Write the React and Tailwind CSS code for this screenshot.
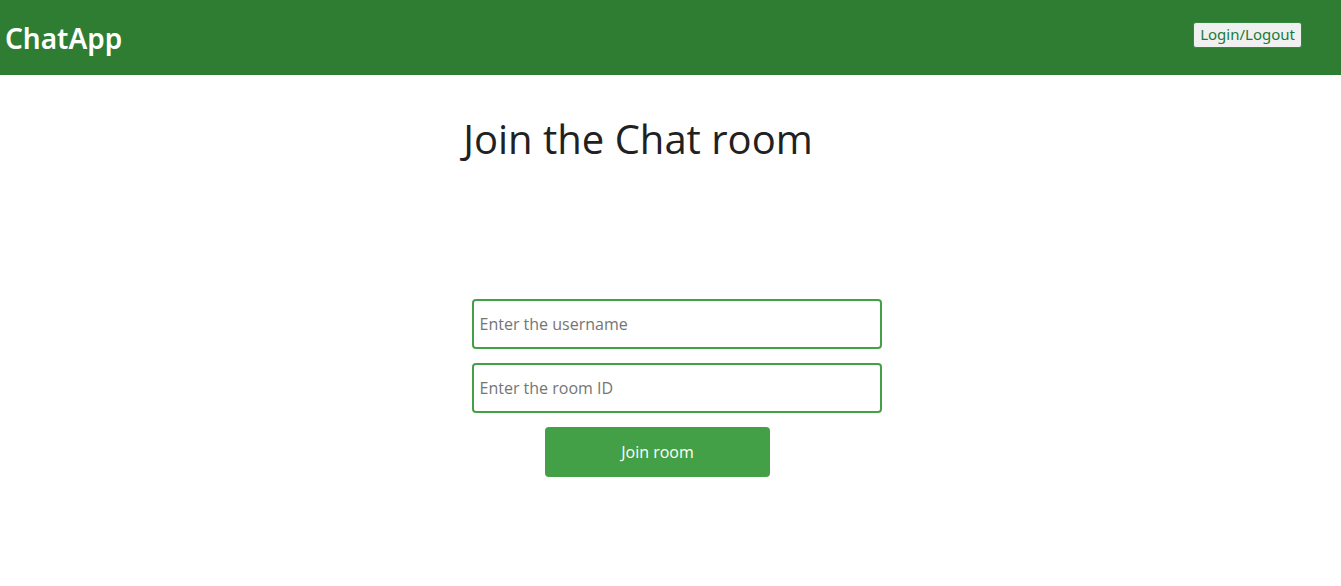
import React, { useState } from 'react';

export default function App() {
  const [username, setUsername] = useState('');
  const [roomId, setRoomId] = useState('');

  return (
    <div className="min-h-screen bg-white" style={{ fontFamily: '"Open Sans", sans-serif' }}>
      {/* Navbar */}
      <header className="h-[75px] bg-[#2e7d32] flex items-center justify-between pl-[5px] pr-[39px]">
        <h1 className="text-[28px] font-semibold text-white leading-none" style={{ fontFamily: '"Noto Sans", sans-serif' }}>
          ChatApp
        </h1>
        <button className="mb-[6px] h-[26px] px-[6px] bg-[#f0f0f0] text-[#1b7a3a] text-[15px] rounded-[3px] border border-[#2f8a3e] leading-none" style={{ fontFamily: '"Noto Sans", sans-serif' }}>
          Login/Logout
        </button>
      </header>

      <main className="flex flex-col items-center">
        <h2 className="mt-[32px] pr-[65px] text-[40px] text-[#212121] leading-[64px] font-normal">
          Join the Chat room
        </h2>

        <div className="mt-[128px] pl-[12px] flex flex-col items-center">
          <input
            type="text"
            value={username}
            onChange={(e) => setUsername(e.target.value)}
            placeholder="Enter the username"
            className="w-[410px] h-[50px] px-[6px] border-2 border-[#43a047] rounded-[4px] text-[16px] text-[#212121] placeholder:text-[#757575] outline-none"
          />
          <input
            type="text"
            value={roomId}
            onChange={(e) => setRoomId(e.target.value)}
            placeholder="Enter the room ID"
            className="mt-[14px] w-[410px] h-[50px] px-[6px] border-2 border-[#43a047] rounded-[4px] text-[16px] text-[#212121] placeholder:text-[#757575] outline-none"
          />
        </div>

        <div className="mt-[14px] pr-[26px]">
          <button className="w-[225px] h-[50px] bg-[#43a047] text-white text-[16px] rounded-[4px]">
            Join room
          </button>
        </div>
      </main>
    </div>
  );
}
